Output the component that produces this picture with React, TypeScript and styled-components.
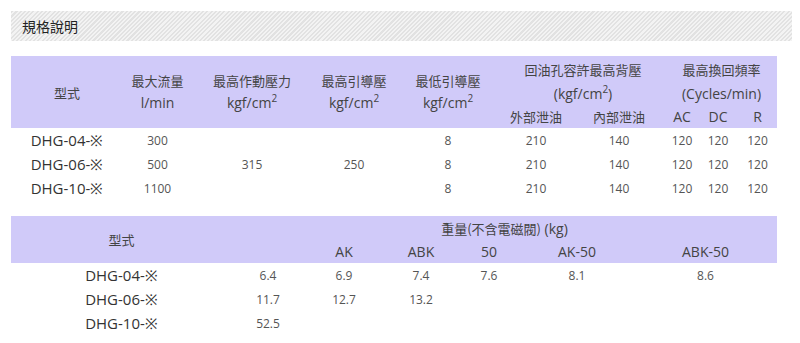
import styled, { createGlobalStyle } from 'styled-components';

const GlobalStyle = createGlobalStyle`
  body {
    margin: 0;
    background: #fff;
    font-family: "Noto Sans", "Noto Sans CJK TC", sans-serif;
    color: #444;
  }
`;

const Page = styled.div`
  padding: 11px 8px 0 11px;
`;

const Titulo = styled.h3`
  margin: 0 0 15px 0;
  height: 30px;
  line-height: 30px;
  padding-left: 11px;
  font-size: 14px;
  font-weight: 400;
  color: #222;
  font-family: "Noto Sans CJK TC", sans-serif;
  background: repeating-linear-gradient(
    -45deg,
    #f3f3f3 0px,
    #f3f3f3 1.5px,
    #e2e2e2 1.5px,
    #e2e2e2 3px
  );
`;

const Tabela = styled.table<{ $gap?: number }>`
  width: 766px;
  border-collapse: collapse;
  table-layout: fixed;
  margin-bottom: ${(p) => p.$gap ?? 0}px;

  th {
    background: #d0caf9;
    font-weight: 400;
    font-size: 13px;
    color: #444;
    padding: 0;
    text-align: center;
    vertical-align: middle;
    font-family: "Noto Sans CJK TC", sans-serif;
  }
  th.lat {
    font-family: "Open Sans", "Noto Sans CJK TC", sans-serif;
    font-size: 14px;
  }
  td {
    padding: 0;
    height: 24px;
    text-align: center;
    font-size: 12px;
    color: #555;
    font-family: "Open Sans", sans-serif;
  }
  td.modelo {
    font-size: 15px;
    color: #333;
  }
  sup {
    font-size: 10px;
    line-height: 0;
    vertical-align: 6px;
  }
`;

const Coluna = styled.col<{ $w: number }>`
  width: ${(p) => p.$w}px;
`;

const Linha = styled.tr<{ $h: number }>`
  height: ${(p) => p.$h}px;
`;

const Bloco = styled.div`
  line-height: 22px;
`;

const Unidade = styled.div`
  font-family: "Open Sans", sans-serif;
  font-size: 14px;
  line-height: 22px;
`;

const Cjk = styled.span`
  font-family: "Noto Sans CJK TC", sans-serif;
  font-size: 13px;
`;

const modelos = ['DHG-04-※', 'DHG-06-※', 'DHG-10-※'];
const fluxo = ['300', '500', '1100'];

const larguras1 = [112, 69, 120, 84, 104, 72, 94, 32, 40, 39];
const larguras2 = [221, 72, 80, 74, 62, 114, 143];

const pesos: string[][] = [
  ['6.4', '6.9', '7.4', '7.6', '8.1', '8.6'],
  ['11.7', '12.7', '13.2', '', '', ''],
  ['52.5', '', '', '', '', ''],
];

const Kgf = () => (
  <>
    kgf/cm<sup>2</sup>
  </>
);

const App = () => {
  return (
    <>
      <GlobalStyle />
      <Page>
        <Titulo>規格說明</Titulo>

        <Tabela $gap={16}>
          <colgroup>
            {larguras1.map((w, i) => (
              <Coluna key={i} $w={w} />
            ))}
          </colgroup>
          <thead>
            <Linha $h={26}>
              <th rowSpan={3}>型式</th>
              <th rowSpan={3}>
                <Bloco>最大流量</Bloco>
                <Unidade>l/min</Unidade>
              </th>
              <th rowSpan={3}>
                <Bloco>最高作動壓力</Bloco>
                <Unidade><Kgf /></Unidade>
              </th>
              <th rowSpan={3}>
                <Bloco>最高引導壓</Bloco>
                <Unidade><Kgf /></Unidade>
              </th>
              <th rowSpan={3}>
                <Bloco>最低引導壓</Bloco>
                <Unidade><Kgf /></Unidade>
              </th>
              <th colSpan={2}>回油孔容許最高背壓</th>
              <th colSpan={3}>最高換回頻率</th>
            </Linha>
            <Linha $h={22}>
              <th colSpan={2} className="lat">(<Kgf />)</th>
              <th colSpan={3} className="lat">(Cycles/min)</th>
            </Linha>
            <Linha $h={24}>
              <th>外部泄油</th>
              <th>內部泄油</th>
              <th className="lat">AC</th>
              <th className="lat">DC</th>
              <th className="lat">R</th>
            </Linha>
          </thead>
          <tbody>
            {modelos.map((m, i) => (
              <tr key={m}>
                <td className="modelo">{m}</td>
                <td>{fluxo[i]}</td>
                {i === 0 && (
                  <>
                    <td rowSpan={3}>315</td>
                    <td rowSpan={3}>250</td>
                  </>
                )}
                <td>8</td>
                <td>210</td>
                <td>140</td>
                <td>120</td>
                <td>120</td>
                <td>120</td>
              </tr>
            ))}
          </tbody>
        </Tabela>

        <Tabela>
          <colgroup>
            {larguras2.map((w, i) => (
              <Coluna key={i} $w={w} />
            ))}
          </colgroup>
          <thead>
            <Linha $h={24}>
              <th rowSpan={2}>型式</th>
              <th colSpan={6} className="lat">
                <Cjk>重量(不含電磁閥)</Cjk> (kg)
              </th>
            </Linha>
            <Linha $h={23}>
              <th></th>
              <th className="lat">AK</th>
              <th className="lat">ABK</th>
              <th className="lat">50</th>
              <th className="lat">AK-50</th>
              <th className="lat">ABK-50</th>
            </Linha>
          </thead>
          <tbody>
            {modelos.map((m, i) => (
              <tr key={m}>
                <td className="modelo">{m}</td>
                {pesos[i].map((p, j) => (
                  <td key={j}>{p}</td>
                ))}
              </tr>
            ))}
          </tbody>
        </Tabela>
      </Page>
    </>
  );
};

export default App;
